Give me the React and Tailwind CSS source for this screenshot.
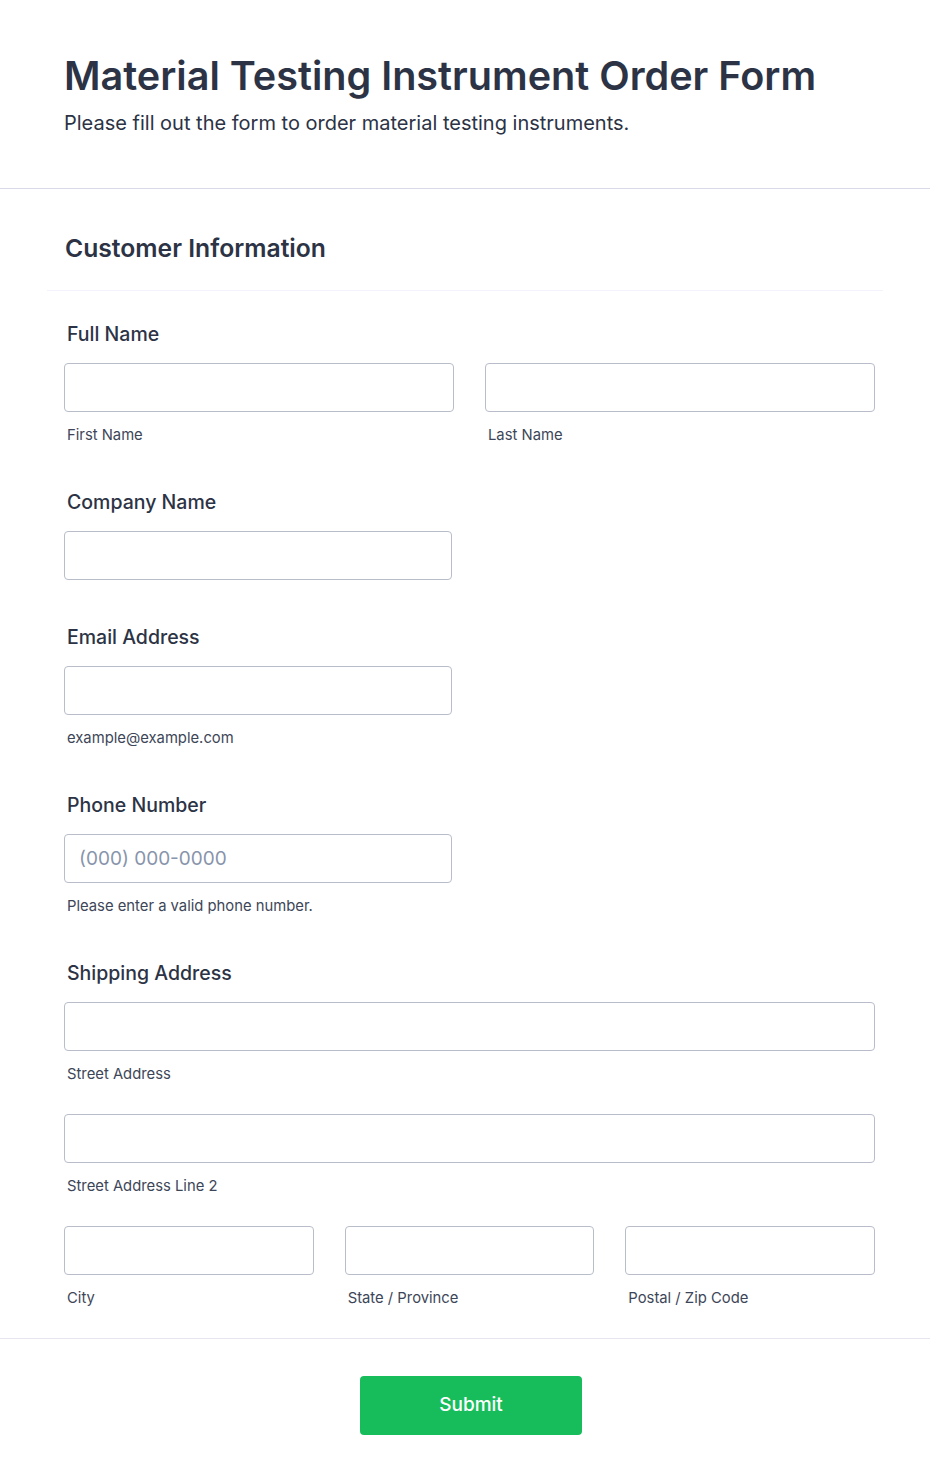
import React from 'react';

const font = { fontFamily: 'Inter, "Noto Sans", sans-serif' };

function Label({ children }) {
  return <div className="h-6 pl-[3px] text-[19.5px] leading-6 font-medium text-[#2c3345]">{children}</div>;
}

function Input({ className = '', placeholder }) {
  return (
    <input
      type="text"
      placeholder={placeholder}
      className={`block h-[49px] rounded-[4px] border border-[#b8bdc9] bg-white px-[14px] text-[19px] text-[#2c3345] placeholder:text-[#8894ab] outline-none ${className}`}
    />
  );
}

function Sub({ children }) {
  return <div className="mt-[13px] h-5 pl-[3px] text-[14.8px] leading-5 text-[#3d4658]">{children}</div>;
}

export default function App() {
  return (
    <div className="min-h-screen bg-white" style={font}>
      {/* Header */}
      <div className="border-b border-[#d8dae9] px-16 pt-[52px] pb-[52px]">
        <h1 className="text-[39.6px] leading-[48px] font-semibold text-[#2c3345]">
          Material Testing Instrument Order Form
        </h1>
        <p className="mt-2 h-7 text-[20px] leading-7 text-[#2c3345] pt-[1px]">
          Please fill out the form to order material testing instruments.
        </p>
      </div>

      {/* Section */}
      <div className="pt-[43px]">
        <div className="mx-[47px] border-b border-[#f3f3fe] pb-[26px]">
          <h2 className="pl-[18px] text-[24.7px] leading-8 font-semibold text-[#2c3345]">Customer Information</h2>
        </div>

        <div className="ml-16 w-[811px] pt-[31px] pb-[30px] flex flex-col gap-[45px]">
          <div>
            <Label>Full Name</Label>
            <div className="mt-[17px] flex gap-[31px]">
              <div className="w-[390px]">
                <Input className="w-full" />
                <Sub>First Name</Sub>
              </div>
              <div className="w-[390px]">
                <Input className="w-full" />
                <Sub>Last Name</Sub>
              </div>
            </div>
          </div>

          <div>
            <Label>Company Name</Label>
            <Input className="mt-[17px] w-[388px]" />
          </div>

          <div>
            <Label>Email Address</Label>
            <Input className="mt-[17px] w-[388px]" />
            <Sub>example@example.com</Sub>
          </div>

          <div>
            <Label>Phone Number</Label>
            <Input className="mt-[17px] w-[388px]" placeholder="(000) 000-0000" />
            <Sub>Please enter a valid phone number.</Sub>
          </div>

          <div>
            <Label>Shipping Address</Label>
            <div className="mt-[17px] flex flex-col gap-[30px]">
              <div>
                <Input className="w-full" />
                <Sub>Street Address</Sub>
              </div>
              <div>
                <Input className="w-full" />
                <Sub>Street Address Line 2</Sub>
              </div>
              <div className="grid grid-cols-3 gap-[31px]">
                <div>
                  <Input className="w-full" />
                  <Sub>City</Sub>
                </div>
                <div>
                  <Input className="w-full" />
                  <Sub>State / Province</Sub>
                </div>
                <div>
                  <Input className="w-full" />
                  <Sub>Postal / Zip Code</Sub>
                </div>
              </div>
            </div>
          </div>
        </div>
      </div>

      {/* Footer */}
      <div className="border-t border-[#e6e6ef] pt-[37px] pb-[50px] flex justify-center pl-[12px]">
        <button className="h-[59px] w-[222px] rounded-[4px] bg-[#18bd5b] text-[19px] font-medium text-white">
          Submit
        </button>
      </div>
    </div>
  );
}
